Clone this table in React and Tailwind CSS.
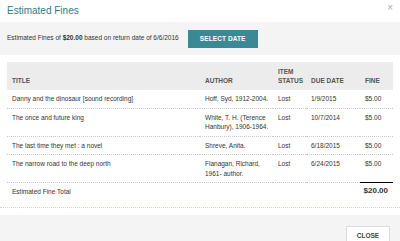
const rows = [
  { title: "Danny and the dinosaur [sound recording]", author: "Hoff, Syd, 1912-2004.", status: "Lost", due: "1/9/2015", fine: "$5.00" },
  { title: "The once and future king", author: "White, T. H. (Terence Hanbury), 1906-1964.", status: "Lost", due: "10/7/2014", fine: "$5.00" },
  { title: "The last time they met : a novel", author: "Shreve, Anita.", status: "Lost", due: "6/18/2015", fine: "$5.00" },
  { title: "The narrow road to the deep north", author: "Flanagan, Richard, 1961- author.", status: "Lost", due: "6/24/2015", fine: "$5.00" },
];

const App = () => {
  return (
    <div className="w-[400px] h-[241px] overflow-hidden bg-white text-[#333] font-['Liberation_Sans',Arial,sans-serif]">
      {/* header */}
      <div className="relative h-[22px] flex items-center pl-[7px]">
        <h1 className="text-[10px] leading-none text-[#2f7b8c]">Estimated Fines</h1>
        <span className="absolute right-[7px] top-[3px] text-[10px] leading-none text-[#aaa]">×</span>
      </div>

      {/* date band */}
      <div className="h-[33px] flex items-center pl-[7px] bg-[#f5f4f5]">
        <p className="text-[6.5px] leading-none">
          Estimated Fines of <b>$20.00</b> based on return date of 6/6/2016
        </p>
        <button className="ml-[9px] w-[70px] h-[18px] bg-[#3b8995] text-white text-[6.5px] font-bold tracking-[0.1px]">
          SELECT DATE
        </button>
      </div>

      {/* table */}
      <div className="mt-[7px] mx-[7px] pb-[10px]">
        <table className="w-[386px] table-fixed text-[6.5px] leading-[9.5px] border-collapse">
          <colgroup>
            <col className="w-[193px]" />
            <col className="w-[73px]" />
            <col className="w-[33px]" />
            <col className="w-[54px]" />
            <col className="w-[33px]" />
          </colgroup>
          <thead>
            <tr className="bg-[#ececec] text-left text-[#555] h-[28px]">
              <th className="pl-[5px] pb-[5px] align-bottom font-bold">TITLE</th>
              <th className="pl-[5px] pb-[5px] align-bottom font-bold">AUTHOR</th>
              <th className="pl-[5px] pb-[5px] align-bottom font-bold leading-[9px]">ITEM<br />STATUS</th>
              <th className="pl-[5px] pb-[5px] align-bottom font-bold">DUE DATE</th>
              <th className="pl-[5px] pb-[5px] align-bottom font-bold">FINE</th>
            </tr>
          </thead>
          <tbody>
            {rows.map((r) => (
              <tr key={r.title} className="border-b border-dotted border-[#c8c8c8] align-top">
                <td className="pl-[5px] py-[4px]">{r.title}</td>
                <td className="pl-[5px] py-[4px]">{r.author}</td>
                <td className="pl-[5px] py-[4px]">{r.status}</td>
                <td className="pl-[5px] py-[4px]">{r.due}</td>
                <td className="pl-[5px] py-[4px]">{r.fine}</td>
              </tr>
            ))}
            <tr className="align-top">
              <td colSpan={4} className="pl-[5px] pt-[4px]">Estimated Fine Total</td>
              <td className="border-t border-black pt-[3px] pr-[5px] text-right text-[8px] font-bold">$20.00</td>
            </tr>
          </tbody>
        </table>
      </div>

      {/* footer */}
      <div className="border-t border-dotted border-[#d9d6bf] pt-[7px]">
        <div className="h-[40px] bg-[#f5f4f5] flex justify-end pt-[11px] pr-[10px]">
          <button className="w-[44px] h-[20px] bg-white border border-[#dcdcdc] text-[6.5px] font-bold text-[#444]">
            CLOSE
          </button>
        </div>
      </div>
    </div>
  );
};

export default App;
